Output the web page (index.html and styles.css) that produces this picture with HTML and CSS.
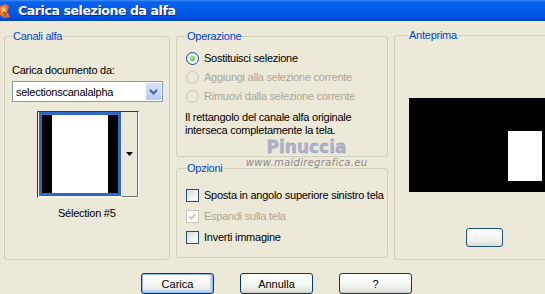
FILE: index.html
```html
<!DOCTYPE html>
<html lang="it">
<head>
    <meta charset="UTF-8">
    <title>Carica selezione da alfa</title>
    <link rel="stylesheet" href="styles.css">
</head>
<body>
    <div class="dialog">
        <div class="titlebar">
            <svg class="app-icon" width="12" height="16" viewBox="0 0 12 16">
                <path d="M0 3 L6 1 L9 4 L7 9 L10 14 L4 15 L0 12 Z" fill="#e8743a"/>
                <path d="M1 5 L5 4 L6 8 L2 10 Z" fill="#f7c873"/>
                <path d="M3 9 L6 11 L4 14" stroke="#7a2a10" fill="none"/>
            </svg>
            <span class="title">Carica selezione da alfa</span>
        </div>

        <div class="content">
            <fieldset class="group group-canali">
                <legend>Canali alfa</legend>
                <div class="field-label">Carica documento da:</div>
                <div class="select">
                    <span>selectionscanalalpha</span>
                    <span class="select-btn">
                        <svg width="9" height="6" viewBox="0 0 9 6"><path d="M1 1 L4.5 4.5 L8 1" stroke="#4d6185" stroke-width="2" fill="none"/></svg>
                    </span>
                </div>
                <div class="thumb">
                    <div class="thumb-img">
                        <span class="bar"></span>
                        <span class="fill"></span>
                        <span class="bar"></span>
                    </div>
                    <div class="thumb-btn">
                        <svg width="7" height="4" viewBox="0 0 7 4"><path d="M0 0 H7 L3.5 4 Z" fill="#000"/></svg>
                    </div>
                </div>
                <div class="thumb-label">Sélection #5</div>
            </fieldset>

            <div class="column">
                <fieldset class="group group-operazione">
                    <legend>Operazione</legend>
                    <div class="option"><span class="radio checked"></span>Sostituisci selezione</div>
                    <div class="option disabled"><span class="radio"></span>Aggiungi alla selezione corrente</div>
                    <div class="option disabled"><span class="radio"></span>Rimuovi dalla selezione corrente</div>
                    <p class="note">Il rettangolo del canale alfa originale<br>interseca completamente la tela.</p>
                </fieldset>
                <fieldset class="group group-opzioni">
                    <legend>Opzioni</legend>
                    <div class="option"><span class="check"></span>Sposta in angolo superiore sinistro tela</div>
                    <div class="option disabled"><span class="check checked">
                        <svg width="9" height="9" viewBox="0 0 9 9"><path d="M1.5 4.5 L3.5 6.5 L7.5 2" stroke="#c3c1b4" stroke-width="1.8" fill="none"/></svg>
                    </span>Espandi sulla tela</div>
                    <div class="option"><span class="check"></span>Inverti immagine</div>
                </fieldset>
                <div class="watermark">
                    <div class="wm-name">Pinuccia</div>
                    <div class="wm-url">www.maidiregrafica.eu</div>
                </div>
            </div>

            <fieldset class="group group-anteprima">
                <legend>Anteprima</legend>
                <div class="preview">
                    <span class="preview-sel"></span>
                </div>
                <div class="preview-btn-row">
                    <button class="small-btn"></button>
                </div>
            </fieldset>
        </div>

        <div class="buttons">
            <button class="btn default">Carica</button>
            <button class="btn">Annulla</button>
            <button class="btn">?</button>
        </div>
    </div>
</body>
</html>
```

FILE: styles.css
```css
body {
    margin: 0;
    background-color: #ece9d8;
    font-family: "Liberation Sans", Arial, sans-serif;
    font-size: 11px;
    letter-spacing: -0.25px;
    color: #000;
    overflow: hidden;
}
.dialog {
    width: 545px;
    height: 294px;
    position: relative;
    overflow: hidden;
}
.titlebar {
    height: 21px;
    display: flex;
    align-items: center;
    background: linear-gradient(#3d8ff8 0px, #0a62ec 2px, #025ae9 10px, #0052e2 17px, #0047d0 20px, #0a4ab5 21px);
}
.app-icon {
    margin: 0 6px 0 0;
    flex: none;
}
.title {
    color: #fff;
    font-family: "DejaVu Sans", sans-serif;
    font-weight: bold;
    font-size: 12.5px;
    letter-spacing: -0.4px;
    text-shadow: 1px 1px 0 #0a2a8a;
}
.content {
    display: flex;
    gap: 6px;
    padding: 9px 0 0 4px;
    height: 231px;
}
.content > * {
    flex: none;
}
.group {
    margin: 0;
    border: 1px solid #d0d0bf;
    border-radius: 3px;
    padding: 0 0 0 7px;
    box-sizing: border-box;
    min-width: 0;
}
.group legend {
    color: #0046d5;
    padding: 0 1px;
    margin-left: 0;
    line-height: 13px;
}
.group-canali {
    width: 166px;
    height: 230px;
}
.column {
    display: flex;
    flex-direction: column;
    gap: 5px;
    position: relative;
}
.group-operazione {
    width: 212px;
    height: 127px;
    padding-left: 9px;
}
.group-opzioni {
    width: 212px;
    height: 96px;
    padding-left: 9px;
}
.group-anteprima {
    width: 160px;
    height: 231px;
    margin-top: -1px;
    padding-left: 13px;
}
.field-label {
    margin-top: 21px;
    line-height: 13px;
}
.select {
    margin-top: 4px;
    width: 146px;
    height: 19px;
    border: 1px solid #7f9db9;
    background: #fff;
    display: flex;
    align-items: center;
    justify-content: space-between;
    padding-left: 3px;
    box-sizing: content-box;
}
.select-btn {
    width: 15px;
    height: 17px;
    margin-right: 1px;
    background: linear-gradient(#d6e2fc, #b7caf5);
    display: flex;
    align-items: center;
    justify-content: center;
}
.thumb {
    margin: 9px 0 0 25px;
    width: 100px;
    height: 85px;
    display: flex;
    border: 1px solid;
    border-color: #3a3a3a #fff #fff #3a3a3a;
}
.thumb-img {
    width: 82px;
    height: 84px;
    border: 3px solid #316ac5;
    box-sizing: border-box;
    display: flex;
    margin: 0 0 0 1px;
}
.thumb-img .bar {
    width: 10px;
    background: #000;
}
.thumb-img .fill {
    flex: 1;
    background: #fff;
}
.thumb-btn {
    flex: 1;
    border-left: 1px solid #fff;
    border-bottom: 1px solid #716f64;
    border-right: 1px solid #716f64;
    display: flex;
    align-items: center;
    justify-content: center;
}
.thumb-label {
    margin: 9px 0 0 0;
    padding-left: 46px;
    line-height: 13px;
}
.option {
    display: flex;
    align-items: center;
    height: 13px;
    line-height: 13px;
    gap: 5px;
    white-space: nowrap;
}
.group-operazione .option:first-of-type {
    margin-top: 9px;
}
.group-operazione .option + .option {
    margin-top: 6px;
}
.group-opzioni .option:first-of-type {
    margin-top: 14px;
}
.group-opzioni .option + .option {
    margin-top: 8px;
}
.option.disabled {
    color: #aca899;
}
.radio {
    width: 11px;
    height: 11px;
    border: 1px solid #1c5180;
    border-radius: 50%;
    background: linear-gradient(135deg, #dcdcd6, #fff);
    display: flex;
    align-items: center;
    justify-content: center;
    flex: none;
}
.radio.checked::after {
    content: "";
    width: 5px;
    height: 5px;
    border-radius: 50%;
    background: radial-gradient(circle at 40% 40%, #b9f0a8, #21a121);
}
.option.disabled .radio {
    border-color: #cac8bb;
    background: #ece9d8;
}
.check {
    width: 11px;
    height: 11px;
    border: 1px solid #1c5180;
    background: linear-gradient(135deg, #dcdcd6, #fff);
    flex: none;
    display: flex;
    align-items: center;
    justify-content: center;
}
.option.disabled .check {
    border-color: #cac8bb;
    background: #fff;
}
.note {
    margin: 8px 0 0 -1px;
    line-height: 13px;
}
.watermark {
    position: absolute;
    left: 68px;
    top: 107px;
    width: 125px;
    text-align: center;
    pointer-events: none;
}
.wm-name {
    font-family: "DejaVu Sans", sans-serif;
    font-size: 17px;
    font-weight: bold;
    color: #aeb2cc;
    letter-spacing: 0;
    line-height: 20px;
    -webkit-text-stroke: 0.3px #9094ae;
}
.wm-url {
    font-family: "DejaVu Sans", sans-serif;
    font-size: 10px;
    color: #8c8c8c;
    font-style: italic;
    letter-spacing: 0.3px;
    line-height: 11px;
}
.preview {
    margin-top: 56px;
    margin-left: 1px;
    width: 145px;
    height: 94px;
    background: #000;
    display: flex;
    align-items: flex-start;
    padding: 33px 0 0 99px;
    box-sizing: border-box;
}
.preview-sel {
    width: 34px;
    height: 50px;
    background: #fff;
}
.preview-btn-row {
    margin-top: 36px;
    padding-left: 58px;
}
.small-btn {
    display: block;
    width: 37px;
    height: 19px;
    border: 1px solid #1c5180;
    border-radius: 3px;
    background: linear-gradient(#fff, #f0f0ea 70%, #dcdcd4);
    padding: 0;
}
.buttons {
    display: flex;
    gap: 26px;
    padding: 12px 0 0 141px;
}
.btn {
    width: 73px;
    height: 21px;
    border: 1px solid #003c74;
    border-radius: 3px;
    background: linear-gradient(#fff, #f4f4f0 60%, #e3e2da 90%, #d6d0c5);
    font-family: "Liberation Sans", Arial, sans-serif;
    font-size: 11px;
    color: #000;
    padding: 0;
}
.btn.default {
    box-shadow: inset 0 0 0 1px #98b8f0, inset -1px -1px 0 2px #c0d4f6;
}
```
